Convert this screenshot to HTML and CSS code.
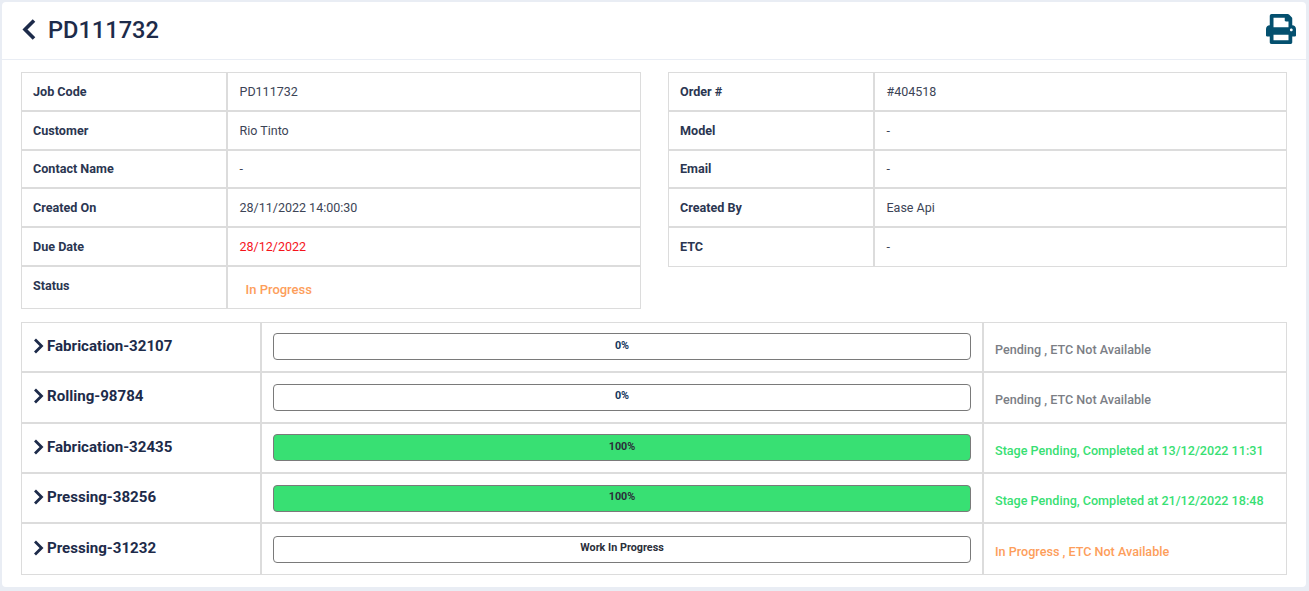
FILE: index.html
```html
<!DOCTYPE html>
<html lang="en">
<head>
<meta charset="utf-8">
<title>PD111732</title>
<link rel="stylesheet" href="styles.css">
</head>
<body>
<main class="card">
  <header class="card-head">
    <div class="title-wrap">
      <svg class="back" viewBox="0 0 14 21" width="14" height="21"><path d="M12 1.5 3 10.5l9 9" fill="none" stroke="#1d2b4a" stroke-width="3.6"/></svg>
      <h1 class="title">PD111732</h1>
    </div>
    <svg class="printer" viewBox="0 0 512 512" width="30" height="30"><path fill="#04506f" d="M448 192V77.25c0-8.49-3.37-16.62-9.37-22.63L393.37 9.37c-6-6-14.14-9.37-22.63-9.37H96C78.33 0 64 14.33 64 32v160c-35.35 0-64 28.65-64 64v112c0 8.84 7.16 16 16 16h48v96c0 17.67 14.33 32 32 32h320c17.67 0 32-14.33 32-32v-96h48c8.84 0 16-7.16 16-16V256c0-35.35-28.65-64-64-64zm-64 256H128v-96h256v96zm0-224H128V64h192v48c0 8.84 7.16 16 16 16h48v96zm48 72c-13.25 0-24-10.75-24-24 0-13.26 10.75-24 24-24s24 10.74 24 24c0 13.25-10.75 24-24 24z"/></svg>
  </header>
  <div class="card-body">
    <div class="info-grid">
      <table class="info">
        <tr><th>Job Code</th><td>PD111732</td></tr>
        <tr><th>Customer</th><td>Rio Tinto</td></tr>
        <tr><th>Contact Name</th><td>-</td></tr>
        <tr><th>Created On</th><td>28/11/2022 14:00:30</td></tr>
        <tr><th>Due Date</th><td class="red">28/12/2022</td></tr>
        <tr class="status-row"><th>Status</th><td><span class="status-val">In Progress</span></td></tr>
      </table>
      <table class="info">
        <tr><th>Order #</th><td>#404518</td></tr>
        <tr><th>Model</th><td>-</td></tr>
        <tr><th>Email</th><td>-</td></tr>
        <tr><th>Created By</th><td>Ease Api</td></tr>
        <tr><th>ETC</th><td>-</td></tr>
      </table>
    </div>
    <table class="stages">
      <tr>
        <td class="s-name"><span class="s-wrap"><svg class="chev" viewBox="0 0 11 16" width="11" height="16"><path d="M2 1.5 8.5 8 2 14.5" fill="none" stroke="#1d2b4a" stroke-width="2.8"/></svg>Fabrication-32107</span></td>
        <td class="s-bar"><div class="bar"><span class="bar-text navy">0%</span></div></td>
        <td class="s-note grey">Pending , ETC Not Available</td>
      </tr>
      <tr>
        <td class="s-name"><span class="s-wrap"><svg class="chev" viewBox="0 0 11 16" width="11" height="16"><path d="M2 1.5 8.5 8 2 14.5" fill="none" stroke="#1d2b4a" stroke-width="2.8"/></svg>Rolling-98784</span></td>
        <td class="s-bar"><div class="bar"><span class="bar-text navy">0%</span></div></td>
        <td class="s-note grey">Pending , ETC Not Available</td>
      </tr>
      <tr>
        <td class="s-name"><span class="s-wrap"><svg class="chev" viewBox="0 0 11 16" width="11" height="16"><path d="M2 1.5 8.5 8 2 14.5" fill="none" stroke="#1d2b4a" stroke-width="2.8"/></svg>Fabrication-32435</span></td>
        <td class="s-bar"><div class="bar done"><span class="bar-text">100%</span></div></td>
        <td class="s-note green">Stage Pending, Completed at 13/12/2022 11:31</td>
      </tr>
      <tr>
        <td class="s-name"><span class="s-wrap"><svg class="chev" viewBox="0 0 11 16" width="11" height="16"><path d="M2 1.5 8.5 8 2 14.5" fill="none" stroke="#1d2b4a" stroke-width="2.8"/></svg>Pressing-38256</span></td>
        <td class="s-bar"><div class="bar done"><span class="bar-text">100%</span></div></td>
        <td class="s-note green">Stage Pending, Completed at 21/12/2022 18:48</td>
      </tr>
      <tr>
        <td class="s-name"><span class="s-wrap"><svg class="chev" viewBox="0 0 11 16" width="11" height="16"><path d="M2 1.5 8.5 8 2 14.5" fill="none" stroke="#1d2b4a" stroke-width="2.8"/></svg>Pressing-31232</span></td>
        <td class="s-bar"><div class="bar"><span class="bar-text">Work In Progress</span></div></td>
        <td class="s-note orange">In Progress , ETC Not Available</td>
      </tr>
    </table>
  </div>
</main>
</body>
</html>
```

FILE: styles.css
```css
* { box-sizing: border-box; }
html, body { height: 100%; }
body {
  margin: 0;
  padding: 2px 3px 4px 2px;
  background: #e9edf4;
  font-family: Roboto, "Liberation Sans", sans-serif;
  color: #1d2b4a;
  overflow: hidden;
}
.card {
  background: #fff;
  border-radius: 4px;
  height: 585px;
}
.card-head {
  height: 58px;
  border-bottom: 1px solid #e9edf4;
  display: flex;
  align-items: center;
  justify-content: space-between;
  padding: 0 10px 0 20px;
}
.title-wrap { display: flex; align-items: center; gap: 12px; }
.back { display: block; margin-top: -2px; }
.title {
  margin: -2px 0 0;
  font-size: 23.6px;
  font-weight: 500;
  line-height: 28px;
  color: #1d2b4a;
}
.printer { display: block; margin-bottom: 3px; }
.card-body { padding: 12px 18px 0 19px; }
.info-grid {
  display: grid;
  grid-template-columns: 620px 619px;
  column-gap: 27px;
  align-items: start;
}
table {
  border-collapse: separate;
  border-spacing: 0;
  table-layout: fixed;
  width: 100%;
  background: #fff;
  border-top: 1px solid #dcdcdc;
  border-left: 1px solid #dcdcdc;
}
th, td {
  border-right: 2px solid #dcdcdc;
  border-bottom: 2px solid #dcdcdc;
}
tr > :last-child { border-right-width: 1px; }
tr:last-child > * { border-bottom-width: 1px; }
.info tr { height: 38.75px; }
.info th {
  width: 206px;
  padding: 0 11px;
  text-align: left;
  font-size: 12.6px;
  font-weight: 700;
  color: #2b3651;
}
.info td {
  padding: 0 11.5px;
  font-size: 12.5px;
  color: #3c4456;
}
.info td.red { color: #f5141c; }
.info tr.status-row { height: 42px; }
.status-row th { vertical-align: top; padding-top: 11px; }
.status-val {
  display: inline-block;
  padding: 4px 6px 0;
  font-weight: 500;
  color: #fd9e5b;
  font-size: 13px;
}
.stages { margin-top: 13px; width: 1266px; }
.stages tr { height: 50.4px; }
.s-name { width: 240px; padding: 0 11px; vertical-align: middle; }
.s-wrap {
  display: flex;
  align-items: center;
  gap: 3px;
  font-size: 15.1px;
  font-weight: 700;
  color: #1d2b4a;
  margin-top: -2px;
}
.chev { display: block; flex: none; }
.s-bar { width: 722px; padding: 0 11px; }
.bar {
  height: 27px;
  border: 1px solid #7a7a7a;
  border-radius: 4px;
  display: flex;
  align-items: center;
  justify-content: center;
  background: #fff;
  padding-bottom: 3px;
}
.bar.done { background: #38e073; }
.bar-text { font-size: 10.8px; font-weight: 700; color: #2b2f3a; }
.bar-text.navy { color: #14365c; }
.s-note { padding: 5px 11px 0; font-size: 12.6px; font-weight: 500; }
.grey { color: #7b7e85; }
.green { color: #38e073; }
.orange { color: #fd9e5b; }
```
